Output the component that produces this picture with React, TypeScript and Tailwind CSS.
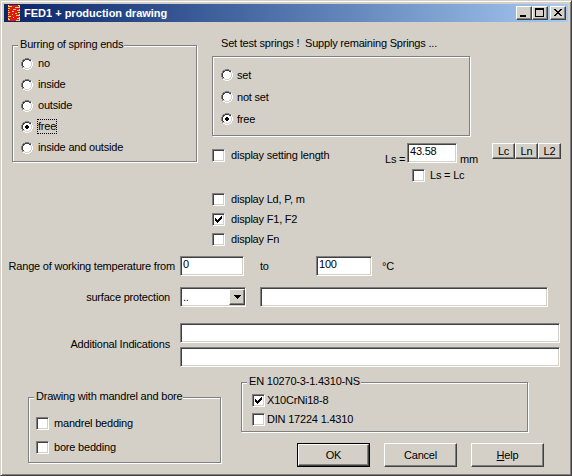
import React from 'react'

const sunken =
  'border border-t-[#808080] border-l-[#808080] border-b-white border-r-white shadow-[inset_1px_1px_#404040,inset_-1px_-1px_#d4d0c8]'
const raised =
  'border border-t-white border-l-white border-b-[#404040] border-r-[#404040] shadow-[inset_-1px_-1px_#808080]'

const palette: Record<string, string> = {
  '#': '#000000',
  g: '#808080',
  d: '#404040',
  w: '#ffffff',
  l: '#d4d0c8',
  r: '#e01818',
  y: '#f0e050',
}

function Pixels({ rows }: { rows: string[] }) {
  const w = rows[0].length
  const h = rows.length
  return (
    <svg width={w} height={h} viewBox={`0 0 ${w} ${h}`} shapeRendering="crispEdges" className="block shrink-0">
      {rows.flatMap((row, y) =>
        row.split('').map((c, x) =>
          palette[c] ? <rect key={`${x}-${y}`} x={x} y={y} width="1" height="1" fill={palette[c]} /> : null
        )
      )}
    </svg>
  )
}

const radioRows = [
  '....gggg....',
  '..ggddddgg..',
  '.gddwwwwddw.',
  '.gdwwwwwwlw.',
  'gdwwwwwwwwlw',
  'gdwwwwwwwwlw',
  'gdwwwwwwwwlw',
  'gdwwwwwwwwlw',
  '.gdwwwwwwlw.',
  '.gllwwwwllw.',
  '..wwllllww..',
  '....wwww....',
]

function Radio({ checked }: { checked?: boolean }) {
  const rows = checked
    ? radioRows.map((r, y) => {
        const dot = y === 4 || y === 7 ? [5, 6] : y === 5 || y === 6 ? [4, 5, 6, 7] : []
        return r
          .split('')
          .map((c, x) => (dot.includes(x) ? '#' : c))
          .join('')
      })
    : radioRows
  return <Pixels rows={rows} />
}

const tick = ['......#', '.....##', '#...###', '##.###.', '#####..', '.###...', '..#....']

function CheckBox({ checked }: { checked?: boolean }) {
  return (
    <span className={`flex h-[13px] w-[13px] shrink-0 items-center justify-center bg-white ${sunken}`}>
      {checked && <Pixels rows={tick} />}
    </span>
  )
}

function Group({
  title,
  className,
  children,
}: {
  title?: string
  className?: string
  children: React.ReactNode
}) {
  return (
    <div className={`relative border border-[#808080] shadow-[1px_1px_#fff,inset_1px_1px_#fff] ${className ?? ''}`}>
      {title && (
        <span className="absolute left-[5px] top-[-8px] bg-[#d4d0c8] pl-[2px] pr-[1px] leading-[13px] whitespace-nowrap">
          {title}
        </span>
      )}
      {children}
    </div>
  )
}

function TextBox({ value, className }: { value?: string; className?: string }) {
  return (
    <div className={`h-[20px] shrink-0 bg-white pl-[2px] pt-[1px] leading-[13px] ${sunken} ${className ?? ''}`}>
      {value}
    </div>
  )
}

function Button({ label, isDefault }: { label: React.ReactNode; isDefault?: boolean }) {
  const face = `flex h-full w-full items-center justify-center bg-[#d4d0c8] ${raised}`
  return (
    <div className={`h-[24px] w-[73px] ${isDefault ? 'border border-black' : ''}`}>
      <div className={face}>{label}</div>
    </div>
  )
}

const minGlyph = ['######', '######']
const maxGlyph = [
  '#########',
  '#########',
  '#.......#',
  '#.......#',
  '#.......#',
  '#.......#',
  '#.......#',
  '#.......#',
  '#########',
]
const closeGlyph = ['##....##', '.##..##.', '..####..', '...##...', '..####..', '.##..##.', '##....##']
const arrowGlyph = ['#######', '.#####.', '..###..', '...#...']

const iconRows = [
  'yrrrrrrrrryy',
  'yyyyrrrrrrry',
  'rrrrrrryyyyy',
  'yyrrrrrrrrrr',
  'rrrrryyyrrry',
  'yrrrrrrrryyy',
  'rrrryyrrrrrr',
  'yyrrrrrrrryy',
  'rrrrrrryyrrr',
  'yrrryrrrrrry',
  'rrrrrrrryyyy',
  'yyyrrrrrrrrr',
  'rrrrryrrrrry',
  'yrrrrrrrryyy',
  'yyrrrrrrrrry',
  'rrrrrrrryyyy',
]

function TitleButton({ glyph, pad }: { glyph: string[]; pad: string }) {
  return (
    <div className={`flex h-[14px] w-[16px] bg-[#d4d0c8] ${raised} ${pad}`}>
      <Pixels rows={glyph} />
    </div>
  )
}

export default function App() {
  const burring = ['no', 'inside', 'outside', 'free', 'inside and outside']
  const setting = ['set', 'not set', 'free']

  return (
    <div className="flex h-[476px] w-[572px] flex-col border border-t-[#d4d0c8] border-l-[#d4d0c8] border-b-[#404040] border-r-[#404040] bg-[#d4d0c8] p-[3px] font-['Liberation_Sans',Arial,sans-serif] text-[11px] leading-[13px] tracking-[-0.2px] text-black shadow-[inset_1px_1px_#fff,inset_-1px_-1px_#808080]">
      {/* title bar */}
      <div className="flex h-[18px] shrink-0 items-center bg-linear-to-r from-[#0a246a] to-[#a6caf0]">
        <div className="ml-[4px]">
          <Pixels rows={iconRows} />
        </div>
        <span className="ml-[4px] text-[11px] font-bold tracking-[0px] text-white">FED1 + production drawing</span>
        <div className="ml-auto mr-[2px] flex items-center">
          <TitleButton glyph={minGlyph} pad="items-start pl-[3px] pt-[8px]" />
          <TitleButton glyph={maxGlyph} pad="items-start pl-[2px] pt-[1px]" />
          <div className="ml-[2px]">
            <TitleButton glyph={closeGlyph} pad="items-start pl-[3px] pt-[2px]" />
          </div>
        </div>
      </div>

      {/* body */}
      <div className="flex h-[450px] flex-col overflow-hidden">
        <div className="flex">
          <div className="ml-[8px] mt-[23px]">
            <Group title="Burring of spring ends" className="h-[117px] w-[185px] pl-[8px] pt-[7px]">
              {burring.map((item) => (
                <div key={item} className="flex h-[21px] items-center gap-[5px]">
                  <Radio checked={item === 'free'} />
                  {item === 'free' ? (
                    <span className="outline-1 outline-dotted outline-black">{item}</span>
                  ) : (
                    <span>{item}</span>
                  )}
                </div>
              ))}
            </Group>
          </div>

          <div className="ml-[15px] flex flex-col">
            <div className="ml-[9px] mt-[15px] h-[13px] whitespace-pre">Set test springs !  Supply remaining Springs ...</div>
            <Group className="mt-[6px] h-[80px] w-[258px] pl-[8px] pt-[7px]">
              {setting.map((item) => (
                <div key={item} className="flex h-[22px] items-center gap-[4px]">
                  <Radio checked={item === 'free'} />
                  <span>{item}</span>
                </div>
              ))}
            </Group>

            <div className="mt-[6px] flex items-start">
              <div className="mt-[7px] flex w-[173px] items-center gap-[6px]">
                <CheckBox />
                <span>display setting length</span>
              </div>
              <div className="flex w-[107px] flex-col">
                <div className="mt-[1px] flex items-end">
                  <span className="mb-[-3px] w-[22px]">Ls =</span>
                  <TextBox value="43.58" className="w-[50px]" />
                  <span className="mb-[-3px] ml-[3px]">mm</span>
                </div>
                <div className="ml-[27px] mt-[6px] flex items-center gap-[5px]">
                  <CheckBox />
                  <span>Ls = Lc</span>
                </div>
              </div>
              <div className="mt-[1px] flex">
                {['Lc', 'Ln', 'L2'].map((b) => (
                  <div key={b} className={`flex h-[16px] w-[23px] items-center justify-center bg-[#d4d0c8] ${raised}`}>
                    {b}
                  </div>
                ))}
              </div>
            </div>

            <div className="mt-[7px] flex flex-col">
              {[
                ['display Ld, P, m', false],
                ['display F1, F2', true],
                ['display Fn', false],
              ].map(([label, on]) => (
                <div key={label as string} className="flex h-[20px] items-center gap-[6px]">
                  <CheckBox checked={on as boolean} />
                  <span>{label}</span>
                </div>
              ))}
            </div>
          </div>
        </div>

        {/* working temperature */}
        <div className="mt-[7px] flex h-[20px] items-center">
          <span className="w-[172px] pr-[1px] text-right">Range of working temperature from</span>
          <TextBox value="0" className="ml-[4px] w-[64px]" />
          <span className="ml-[16px] w-[56px]">to</span>
          <TextBox value="100" className="w-[56px]" />
          <span className="ml-[10px]">°C</span>
        </div>

        {/* surface protection */}
        <div className="mt-[11px] flex h-[20px] items-center">
          <span className="w-[172px] pr-[6px] text-right">surface protection</span>
          <div className={`ml-[4px] flex h-[20px] w-[66px] items-center justify-between bg-white ${sunken}`}>
            <span className="pl-[2px] leading-[13px]">..</span>
            <div className={`flex h-[16px] w-[16px] items-center justify-center bg-[#d4d0c8] ${raised}`}>
              <Pixels rows={arrowGlyph} />
            </div>
          </div>
          <TextBox className="ml-[14px] w-[288px]" />
        </div>

        {/* additional indications */}
        <div className="mt-[16px] flex items-center">
          <span className="mt-[-2px] w-[172px] pr-[6px] text-right">Additional Indications</span>
          <div className="ml-[4px] flex w-[380px] flex-col gap-[4px]">
            <TextBox />
            <TextBox />
          </div>
        </div>

        {/* bottom */}
        <div className="flex items-start">
          <div className="ml-[24px] mt-[30px]">
            <Group title="Drawing with mandrel and bore" className="h-[66px] w-[193px] pl-[7px] pt-[13px]">
              {['mandrel bedding', 'bore bedding'].map((item) => (
                <div key={item} className="flex h-[24px] items-center gap-[5px]">
                  <CheckBox />
                  <span>{item}</span>
                </div>
              ))}
            </Group>
          </div>

          <div className="ml-[20px] mt-[15px] flex flex-col">
            <Group title="EN 10270-3-1.4310-NS" className="h-[50px] w-[287px] pl-[10px] pt-[8px]">
              {[
                ['X10CrNi18-8', true],
                ['DIN 17224 1.4310', false],
              ].map(([label, on]) => (
                <div key={label as string} className="flex h-[19px] items-center gap-[2px]">
                  <CheckBox checked={on as boolean} />
                  <span>{label}</span>
                </div>
              ))}
            </Group>
            <div className="ml-[56px] mt-[11px] flex gap-[14px]">
              <Button label="OK" isDefault />
              <Button label="Cancel" />
              <Button
                label={
                  <span>
                    <span className="underline">H</span>elp
                  </span>
                }
              />
            </div>
          </div>
        </div>
      </div>
    </div>
  )
}
